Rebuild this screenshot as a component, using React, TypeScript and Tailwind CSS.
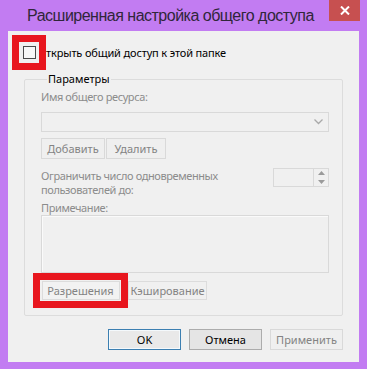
export default function App() {
  return (
    <div className="flex h-[369px] w-[367px] flex-col overflow-hidden bg-[#c27cf2] font-['Noto_Sans','Liberation_Sans',sans-serif] text-[11px] text-black">
      {/* title bar */}
      <div className="flex h-[31px] items-start">
        <span className="min-w-0 flex-1 whitespace-nowrap pl-[27px] pt-[6px] font-['Liberation_Sans',sans-serif] text-[16px] leading-[20px] tracking-[-0.5px] text-[#30263a]">
          Расширенная настройка общего доступа
        </span>
        <button className="mr-[7px] flex h-[21px] w-[31px] shrink-0 items-center justify-center bg-[#c75050]">
          <svg width="10" height="9" viewBox="0 0 10 9">
            <path d="M1 0.5 L9 8.5 M9 0.5 L1 8.5" stroke="#fff" strokeWidth="2" />
          </svg>
        </button>
      </div>

      {/* client */}
      <div className="mx-[8px] flex h-[331px] flex-col bg-[#f0f0f0]">
        <div className="ml-[4px] mt-[4px] flex items-center">
          <div className="flex h-[35px] w-[34px] items-center justify-center border-[7px] border-[#e8161e] bg-[#f0f0f0]">
            <div className="h-[13px] w-[13px] border border-[#4a4a4a] bg-[#f7f7f7]" />
          </div>
          <span className="whitespace-nowrap leading-[16px] tracking-[-0.15px]">ткрыть общий доступ к этой папке</span>
        </div>

        <fieldset className="mx-[16px] mt-[1px] h-[245px] rounded-[2px] border border-[#dcdcdc] pl-[16px] pr-[13px]">
          <legend className="ml-[6px] px-[1px] leading-[16px]">Параметры</legend>

          <div className="mt-[2px] leading-[16px] tracking-[-0.4px] text-[#8c8c8c]">Имя общего ресурса:</div>

          <div className="mt-[7px] flex h-[20px] items-center justify-end border border-[#d9d9d9] bg-[#f0f0f0] pr-[5px]">
            <svg width="9" height="6" viewBox="0 0 9 6">
              <path d="M0.5 0.5 L4.5 4.5 L8.5 0.5" fill="none" stroke="#a9a9a9" strokeWidth="1.3" />
            </svg>
          </div>

          <div className="mt-[6px] flex gap-[1px]">
            <button className="h-[21px] w-[64px] border border-[#d9d9d9] bg-[#efefef] leading-[16px] text-[#838383]">
              Добавить
            </button>
            <button className="h-[21px] w-[60px] border border-[#d9d9d9] bg-[#efefef] leading-[16px] text-[#838383]">
              Удалить
            </button>
          </div>

          <div className="mt-[9px] flex items-start justify-between">
            <div className="pt-[1px] leading-[14px] tracking-[-0.4px] text-[#8c8c8c]">
              Ограничить число одновременных
              <br />
              пользователей до:
            </div>
            <div className="flex h-[19px] w-[56px] border border-[#d9d9d9] bg-[#f0f0f0]">
              <div className="flex-1" />
              <div className="flex w-[15px] flex-col border-l border-[#d9d9d9]">
                <div className="flex flex-1 items-center justify-center">
                  <svg width="7" height="4" viewBox="0 0 7 4">
                    <path d="M0 4 L3.5 0 L7 4 Z" fill="#9a9a9a" />
                  </svg>
                </div>
                <div className="flex flex-1 items-center justify-center">
                  <svg width="7" height="4" viewBox="0 0 7 4">
                    <path d="M0 0 L3.5 4 L7 0 Z" fill="#9a9a9a" />
                  </svg>
                </div>
              </div>
            </div>
          </div>

          <div className="mt-[4px] leading-[14px] tracking-[-0.4px] text-[#8c8c8c]">Примечание:</div>
          <div className="h-[58px] border border-[#d9d9d9] bg-[#f0f0f0] shadow-[inset_1px_1px_0_#fafafa]" />

          <div className="-ml-[8px] flex items-center">
            <div className="flex h-[35px] w-[95px] items-center justify-center border-[7px] border-[#e8161e] bg-[#f0f0f0]">
              <button className="h-[19px] w-[78px] border border-[#dcdcdc] bg-[#f2f2f2] leading-[16px] text-[#838383]">
                Разрешения
              </button>
            </div>
            <button className="h-[19px] w-[79px] border border-[#dcdcdc] bg-[#f0f0f0] leading-[16px] text-[#838383]">
              Кэширование
            </button>
          </div>
        </fieldset>

        <div className="mr-[16px] mt-[13px] flex justify-end gap-[8px]">
          <button className="h-[21px] w-[73px] border border-[#3c7fb1] bg-[#e9e9e9] leading-[16px] shadow-[inset_0_0_0_1px_#f4f9fc]">
            OK
          </button>
          <button className="h-[21px] w-[73px] border border-[#acacac] bg-[#e5e5e5] leading-[16px]">
            Отмена
          </button>
          <button className="h-[21px] w-[73px] border border-[#d9d9d9] bg-[#efefef] leading-[16px] text-[#838383]">
            Применить
          </button>
        </div>
      </div>
    </div>
  );
}
